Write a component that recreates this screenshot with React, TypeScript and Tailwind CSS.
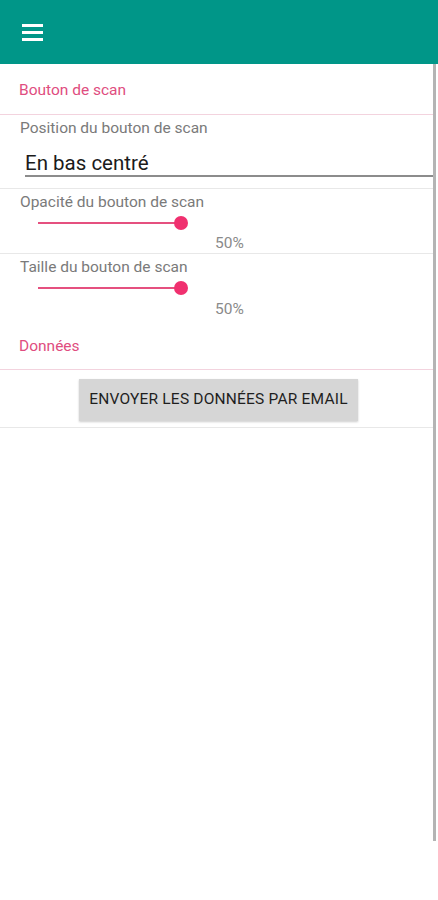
import React from 'react'

function Slider() {
  return (
    <div className="relative h-[14px] ml-[38px] w-[150px]">
      <div className="absolute left-0 top-[6px] h-[2px] w-[143px] bg-[#e5507f]" />
      <div className="absolute left-[136px] top-0 h-[14px] w-[14px] rounded-full bg-[#f0306f]" />
    </div>
  )
}

export default function App() {
  return (
    <div className="relative min-h-[900px] bg-white font-['Roboto',sans-serif]">
      {/* Toolbar */}
      <header className="h-16 bg-[#009688] flex items-center pl-[22px]">
        <div className="flex flex-col gap-[4px]">
          <span className="block h-[3px] w-[21px] bg-white" />
          <span className="block h-[3px] w-[21px] bg-white" />
          <span className="block h-[3px] w-[21px] bg-white" />
        </div>
      </header>

      <div className="w-[433px]">
        {/* Bouton de scan */}
        <div className="h-[51px] flex items-center pl-[19px] border-b border-[#f3d3de]">
          <span className="text-[15.5px] text-[#e04d80] mt-[3px]">Bouton de scan</span>
        </div>

        <div className="border-b border-[#e8e8e8] h-[74px]">
          <div className="pl-[20px] pt-[3px] text-[15.5px] leading-[20px] text-[#7a7a7a]">Position du bouton de scan</div>
          <div className="ml-[25px] mt-[12px] h-[27px] border-b-2 border-[#8c8c8c] text-[20.5px] leading-[26px] text-[#1b1b1b]">
            En bas centré
          </div>
        </div>

        <div className="border-b border-[#e8e8e8] h-[65px]">
          <div className="pl-[20px] pt-[3px] text-[15.5px] leading-[20px] text-[#7a7a7a]">Opacité du bouton de scan</div>
          <div className="mt-[4px]">
            <Slider />
          </div>
          <div className="pl-[215px] mt-[4px] text-[15.5px] leading-[18px] text-[#8a8a8a]">50%</div>
        </div>

        <div className="h-[70px]">
          <div className="pl-[20px] pt-[3px] text-[15.5px] leading-[20px] text-[#7a7a7a]">Taille du bouton de scan</div>
          <div className="mt-[4px]">
            <Slider />
          </div>
          <div className="pl-[215px] mt-[5px] text-[15.5px] leading-[18px] text-[#8a8a8a]">50%</div>
        </div>

        {/* Données */}
        <div className="h-[46px] flex items-center pl-[19px] border-b border-[#f3d3de]">
          <span className="text-[15.5px] text-[#e04d80]">Données</span>
        </div>

        <div className="h-[58px] flex justify-center pt-[9px] border-b border-[#e8e8e8]">
          <button className="h-[42px] w-[279px] bg-[#d6d6d6] shadow-[0_1px_2px_rgba(0,0,0,0.2)] text-[15.5px] font-normal text-[#1f1f1f] tracking-[0.2px] ml-[4px]">
            ENVOYER LES DONNÉES PAR EMAIL
          </button>
        </div>
      </div>

      {/* scroll bar */}
      <div className="absolute left-[433px] top-[64px] h-[777px] w-[3px] bg-[#b4b4b4]" />
    </div>
  )
}
